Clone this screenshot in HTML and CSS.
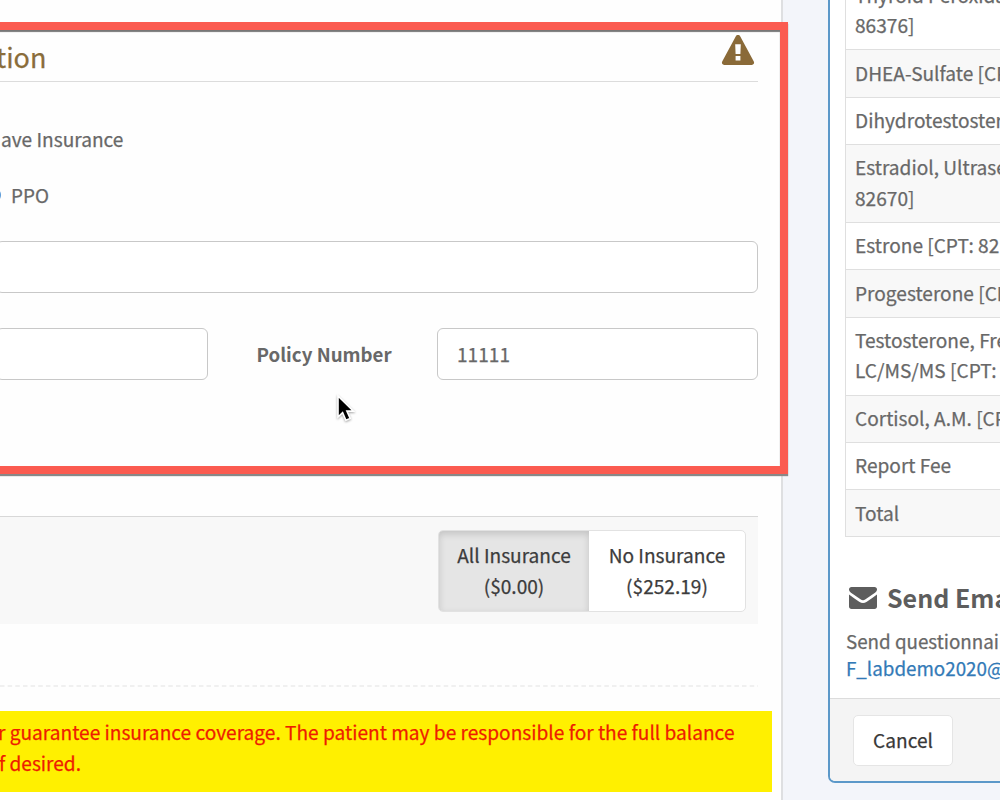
FILE: index.html
```
<!DOCTYPE html>
<html lang="en">
<head>
<meta charset="utf-8">
<title>Insurance Information</title>
<link rel="stylesheet" href="styles.css">
</head>
<body>
<div class="page">
  <main class="main">
    <section class="insurance">
      <header class="section-head">
        <h2 class="section-title">tion</h2>
        <svg class="warn" width="34" height="32" viewBox="0 0 34 32"><path fill="#8a6a38" fill-rule="evenodd" d="M17 1c1 0 1.800.5 2.300 1.400l13.500 25.200c.9 1.700-.2 3.400-2 3.400H3.200c-1.800 0-2.900-1.700-2-3.400L14.700 2.400C15.200 1.500 16 1 17 1zM14.200 10.200l.4 9.800h4.800l.4-9.800zM14.600 21.900v4.700h4.800v-4.700z"/></svg>
      </header>
      <div class="have"><span>ave Insurance</span></div>
      <div class="plan"><i class="radio"></i><span>PPO</span></div>
      <div class="field field-full"></div>
      <div class="policy-row">
        <div class="field field-left"></div>
        <label class="label">Policy Number</label>
        <div class="field field-policy">11111</div>
      </div>
    </section>
    <section class="totals">
      <div class="btn-group">
        <div class="toggle active"><span>All Insurance</span><span>($0.00)</span></div>
        <div class="toggle"><span>No Insurance</span><span>($252.19)</span></div>
      </div>
    </section>
    <svg class="dash" width="758" height="2"><path d="M0 1H758" stroke="#f0f0f0" stroke-width="2" stroke-dasharray="4.500 3.150"/></svg>
    <div class="notice"><p class="line-a">r guarantee insurance coverage. The patient may be responsible for the full balance</p><p class="line-b">f desired.</p></div>
    <div class="highlight"></div>
    <svg class="cursor" width="22" height="32" viewBox="0 0 22 32"><path d="M3 2v21l4.600-4.300 3.300 7.600 4.300-1.900-3.300-7.300h6.600z" fill="#000" stroke="#fff" stroke-width="1.600"/></svg>
  </main>
  <aside class="side">
    <div class="tests">
      <div class="row two plain">Thyroid Peroxidase<br>86376]</div>
      <div class="row">DHEA-Sulfate [CPT</div>
      <div class="row plain">Dihydrotestosterone</div>
      <div class="row two">Estradiol, Ultrasens<br>82670]</div>
      <div class="row plain">Estrone [CPT: 82</div>
      <div class="row">Progesterone [CPT</div>
      <div class="row two plain">Testosterone, Free<br>LC/MS/MS [CPT:</div>
      <div class="row">Cortisol, A.M. [CPT</div>
      <div class="row plain">Report Fee</div>
      <div class="row last">Total</div>
    </div>
    <h3 class="send-title"><svg width="28" height="22" viewBox="0 0 28 22"><g fill="#5d5d5d"><path d="M2.500 0h23C27 0 28 1 28 2.300c0 1.500-.8 2.500-2 3.400l-9.500 6.600c-1.800 1.200-3.200 1.200-5 0L2 5.700C.8 4.800 0 3.800 0 2.300 0 1 1 0 2.500 0z"/><path d="M0 7.600c3.400 2.600 6.800 5 10.200 7.200 2.600 1.700 5 1.700 7.600 0C21.200 12.600 24.600 10.200 28 7.600v11.900c0 1.500-1 2.500-2.500 2.500h-23C1 22 0 21 0 19.500z"/></g></svg><span>Send Email</span></h3>
    <p class="send-text">Send questionnaire</p>
    <p class="send-mail">F_labdemo2020@</p>
    <footer class="side-foot"><div class="cancel">Cancel</div></footer>
  </aside>
</div>
</body>
</html>
```
FILE: styles.css
```
* { box-sizing: border-box; }
body {
  margin: 0;
  font-family: "Noto Sans CJK SC", "Noto Sans", sans-serif;
  font-size: 19.1px;
  line-height: 30.4px;
  color: #686868;
  -webkit-text-stroke: 0.25px currentColor;
}
h2, h3, p { margin: 0; font-weight: 400; }
.page { display: flex; width: 1000px; height: 800px; overflow: hidden; background: #f3f5fa; white-space: nowrap; }
.main { position: relative; width: 783px; height: 800px; flex: none; background: #fefefe; border-right: 2px solid #dedfe1; }
.insurance { height: 516px; padding-top: 30px; }
.section-head { display: flex; justify-content: space-between; align-items: center; width: 758px; height: 52px; padding-right: 3px; border-bottom: 1px solid #dcdcdc; }
.section-title { font-size: 27px; color: #8a6d3b; margin: 4px 0 0 -4px; }
.warn { margin-top: -11px; }
.have { margin: 42px 0 0 1px; height: 30px; }
.plan { display: flex; align-items: center; margin-top: 26.400px; gap: 9px; height: 30px; font-size: 18.9px; }
.radio { width: 14px; height: 14px; margin-left: -13px; margin-right: 1px; border-radius: 50%; background: #5b9bd8; }
.field { height: 52px; border: 1px solid #c8c8c8; border-radius: 6px; background: #fff; }
.field-full { width: 762px; margin: 31px 0 35px -4px; }
.policy-row { display: flex; align-items: center; }
.field-left { width: 212px; margin-left: -4px; }
.label { width: 230px; padding-left: 48.500px; font-size: 18.7px; font-weight: 700; -webkit-text-stroke: 0; }
.field-policy { width: 321px; margin-left: -1px; padding: 10px 19px; }
.totals { display: flex; justify-content: flex-end; width: 758px; height: 108px; padding: 13px 12px 0 0; border-top: 1px solid #d8d8d8; background: #f8f8f8; }
.btn-group { display: flex; width: 308px; height: 82px; border: 1px solid #e2e2e2; border-radius: 5px; overflow: hidden; background: #fff; }
.toggle { display: flex; flex-direction: column; align-items: center; width: 156px; padding-top: 9.400px; color: #3c3c3c; }
.toggle.active { width: 150px; background: #e5e5e5; box-shadow: inset 0 3px 7px rgba(0,0,0,.15); }
.dash { display: block; margin: 61px 0 24px; }
.notice { width: 772px; height: 81px; padding-top: 6.400px; background: #fff000; color: #ee1c00; }
.line-a { margin-left: -2px; font-size: 19.120px; }
.line-b { margin-left: -1px; }
.highlight { position: absolute; left: -12px; top: 22px; width: 800px; height: 452px; border: 8px solid #fb5b50; box-shadow: 0 2px 1px #888, inset 0 2px 1px #777; }
.cursor { position: absolute; left: 335px; top: 394px; filter: drop-shadow(0 1px 1px rgba(0,0,0,.35)); }
.side { flex: none; width: 240px; height: 791px; margin: -8px 0 0 45px; padding-top: 8px; border: 2px solid #5b98c9; border-radius: 7px; background: #fff; overflow: hidden; }
.tests { margin: -30.400px 0 0 15px; }
.row { height: 47.400px; padding: 7.300px 0 0 9px; border: solid #dfdfdf; border-width: 1px 0 0 1px; background: #f8f8f8; }
.row.two { height: 77.800px; }
.row.plain { background: #fff; }
.row.last { height: 47.500px; border-bottom-width: 1px; }
.send-title { display: flex; align-items: center; gap: 10px; height: 40px; margin: 40px 0 0 19px; font-size: 25px; font-weight: 700; color: #5d5d5d; -webkit-text-stroke: 0; }
.send-title svg { margin-top: 2px; }
.send-text { height: 28px; margin: 9px 0 0 16px; font-size: 18.8px; }
.send-mail { height: 28px; margin: -0.500px 0 0 16px; font-size: 18.8px; color: #337ab7; }
.side-foot { height: 100px; margin-top: 16.500px; padding: 16px 0 0 23px; border-top: 1px solid #dcdcdc; background: #f4f4f4; }
.cancel { display: flex; align-items: center; justify-content: center; width: 100px; height: 51px; border: 1px solid #e5e5e5; border-radius: 5px; background: #fff; color: #383838; }
```
